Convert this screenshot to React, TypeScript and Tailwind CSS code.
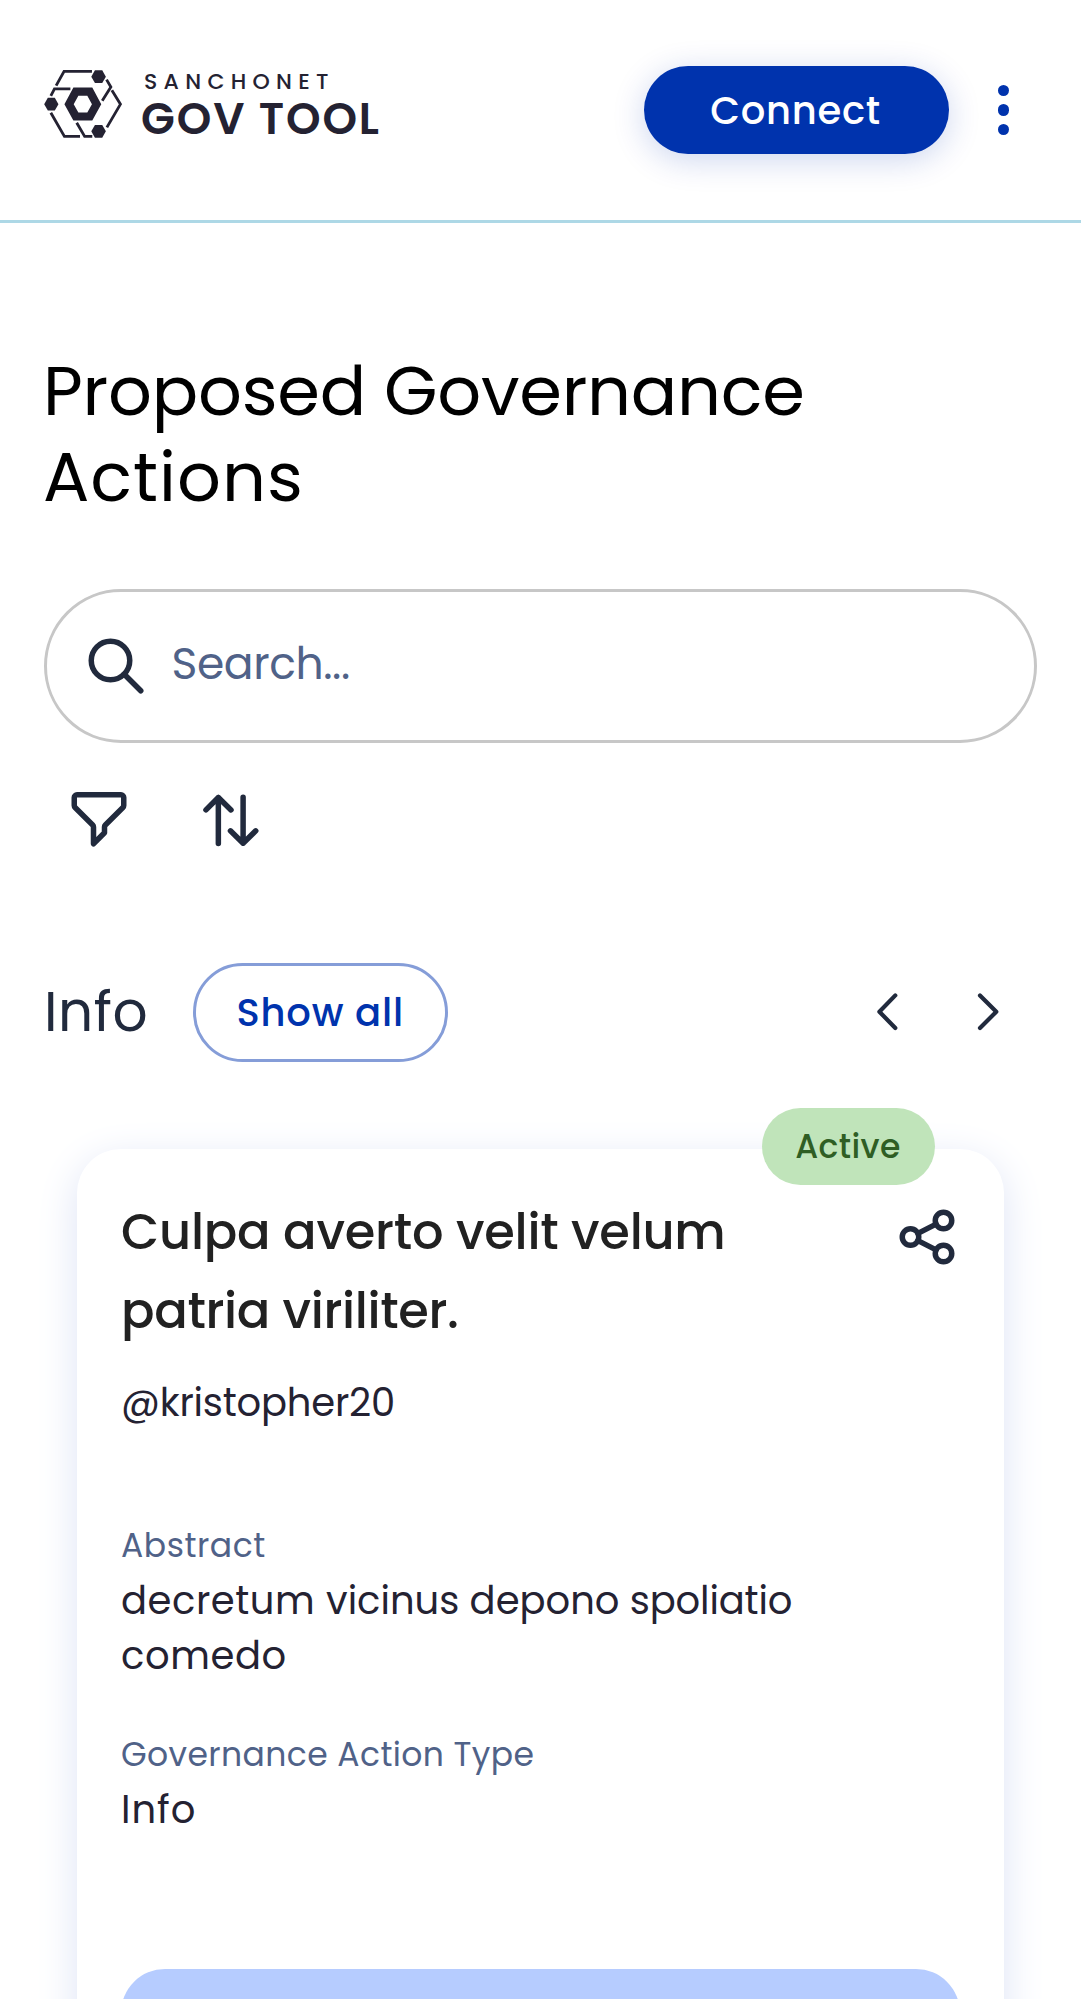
import type { ReactNode } from "react";

function Logo() {
  return (
    <div className="flex h-[82px] items-start gap-[19px] text-[#242232]">
      <svg viewBox="42 57 234 205" className="mt-[0.5px] h-[68px] w-[78px] shrink-0" fill="currentColor">
        <path
          fillRule="evenodd"
          d="M103 160 130 110H187L214 160 187 209H130ZM131 160 145 185H172L186 160 172 135H145Z"
        />
        <path d="M184 77 195 58H217L228 77 217 96H195Z" />
        <path d="M42 160 53 141H74L85 160 74 179H53Z" />
        <path d="M184 242 195 223H217L228 242 217 261H195Z" />
        <g fill="none" stroke="currentColor" strokeWidth="8.5">
          <path d="M78 104 102 61H186" />
          <path d="M230 86 243 108 217 150" />
          <path d="M246 118 272 160 231 230" />
          <path d="M62 135 73 114H121" />
          <path d="M62 186 103 257H150" />
          <path d="M140 216 164 257H187" />
        </g>
      </svg>
      <div className="flex flex-col gap-[3px] pt-[0.5px] whitespace-nowrap">
        <span className="pl-[3px] text-[22px] leading-[24px] font-medium tracking-[6.3px]">SANCHONET</span>
        <span className="text-[44px] leading-[44px] font-semibold tracking-[1.9px]">GOV TOOL</span>
      </div>
    </div>
  );
}

function LineIcon({ children }: { children: ReactNode }) {
  return (
    <svg
      viewBox="0 0 24 24"
      className="size-[66px] shrink-0 text-[#212A3D]"
      fill="none"
      stroke="currentColor"
      strokeWidth="2"
      strokeLinecap="round"
      strokeLinejoin="round"
    >
      {children}
    </svg>
  );
}

function Chevron({ d }: { d: string }) {
  return (
    <svg
      viewBox="0 0 24 40"
      className="h-[40px] w-[24px] text-[#212A3D]"
      fill="none"
      stroke="currentColor"
      strokeWidth="4.2"
      strokeLinecap="round"
      strokeLinejoin="round"
    >
      <path d={d} />
    </svg>
  );
}

function Header() {
  return (
    <header className="flex h-[223px] items-center justify-between border-b-[3px] border-[#ADD8E6] pl-[44px]">
      <Logo />
      <div className="flex items-center pr-[72px]">
        <button className="flex h-[88px] w-[305px] items-center justify-center rounded-full bg-[#0033AD] pt-[1px] pr-[1px] text-[38.5px] font-medium tracking-[0.75px] text-white shadow-[0_6px_33px_rgba(0,51,173,0.2)]">
          Connect
        </button>
        <div className="ml-[49px] flex flex-col gap-[8px]">
          <span className="size-[11.5px] rounded-full bg-[#0033AD]" />
          <span className="size-[11.5px] rounded-full bg-[#0033AD]" />
          <span className="size-[11.5px] rounded-full bg-[#0033AD]" />
        </div>
      </div>
    </header>
  );
}

function ActionCard() {
  return (
    <article className="relative mx-[33px] mt-[87.5px] h-[1100px] rounded-[44px] bg-white px-[44px] pt-[42.5px] shadow-[0_11px_41px_#DDE3F5]">
      <div className="absolute -top-[41px] right-[69px] flex h-[77px] w-[173px] items-center justify-center rounded-full bg-[#C0E4BA] pr-[1px] text-[33px] font-medium tracking-[0.4px] text-[#2F5E24]">
        Active
      </div>
      <div className="flex items-start justify-between">
        <h3 className="text-[49.5px] leading-[79px] font-medium whitespace-nowrap text-[#212121]">
          <span className="block tracking-[-0.23px]">Culpa averto velit velum</span>
          <span className="block tracking-[-0.36px]">patria viriliter.</span>
        </h3>
        <div className="mt-[12.5px]">
          <LineIcon>
            <circle cx="6" cy="12" r="3" />
            <circle cx="18" cy="6" r="3" />
            <circle cx="18" cy="18" r="3" />
            <path d="m8.7 10.7 6.6-3.4M8.7 13.3l6.6 3.4" />
          </LineIcon>
        </div>
      </div>
      <p className="mt-[25px] text-[38.5px] leading-[55px] tracking-[-0.2px] text-[#242232]">@kristopher20</p>
      <p className="mt-[92px] text-[33px] leading-[48px] tracking-[0.55px] text-[#506288]">Abstract</p>
      <p className="mt-[3px] text-[38.5px] leading-[55px] text-[#242232]">
        <span className="block whitespace-nowrap">
          <span className="tracking-[0.55px]">decretum </span>
          vicinus depono <span className="tracking-[-0.15px]">spoliatio</span>
        </span>
        <span className="block tracking-[0.6px]">comedo</span>
      </p>
      <p className="mt-[48px] text-[33px] leading-[48px] tracking-[0.4px] text-[#506288]">Governance Action Type</p>
      <p className="mt-[3px] text-[38.5px] leading-[55px] tracking-[1px] text-[#242232]">Info</p>
      <div className="mt-[132.5px] h-[88px] rounded-full bg-[#B6CCFF]" />
    </article>
  );
}

export default function App() {
  return (
    <div className="h-[1999px] w-[1081px] overflow-hidden bg-white font-['Poppins','Inter',sans-serif]">
      <Header />
      <main className="px-[44px] pt-[125px]">
        <h1 className="-ml-[1px] text-[68.75px] leading-[86px] text-black">
          <span className="block tracking-[-0.25px]">Proposed Governance</span>
          <span className="block tracking-[1px]">Actions</span>
        </h1>
        <div className="mt-[68.5px] flex h-[154px] items-center rounded-full border-[3px] border-[#C7C7C7] pl-[35.5px]">
          <LineIcon>
            <circle cx="10" cy="10" r="7" />
            <path d="m15 15 6 6" />
          </LineIcon>
          <span className="ml-[23px] pb-[3px] text-[44px] tracking-[-0.4px] text-[#506288]">Search...</span>
        </div>
        <div className="mt-[43.5px] flex gap-[66px] pl-[22px]">
          <LineIcon>
            <path d="M3 4.2a1 1 0 0 1 1-1h16a1 1 0 0 1 1 1v2.9a1 1 0 0 1-.3.7l-6.4 6.4a1 1 0 0 0-.3.7V17l-4 4v-6.1a1 1 0 0 0-.3-.7L3.3 7.8A1 1 0 0 1 3 7.1z" />
          </LineIcon>
          <LineIcon>
            <path d="M7.4 20.9V4.2M2.9 8.7l4.5-4.5 4.6 4.5M16.4 4.1v16.7M11.8 16.3l4.6 4.5 4.6-4.5" />
          </LineIcon>
        </div>
        <section>
          <div className="mt-[110.5px] flex items-center">
            <h2 className="w-[148.5px] text-[55px] leading-[82px] tracking-[0.55px] text-[#212A3D]">Info</h2>
            <button className="flex h-[99px] w-[255.5px] items-center justify-center rounded-full border-[3px] border-[#859DD8] pt-[2px] text-[38.5px] font-medium tracking-[0.8px] text-[#0033AD]">
              Show all
            </button>
            <div className="mr-[37px] ml-auto flex gap-[77px]">
              <Chevron d="M20.3 3.4 4.4 19.7l15.9 16.3" />
              <Chevron d="m4 3.4 16.3 16.3L4 36" />
            </div>
          </div>
          <ActionCard />
        </section>
      </main>
    </div>
  );
}
